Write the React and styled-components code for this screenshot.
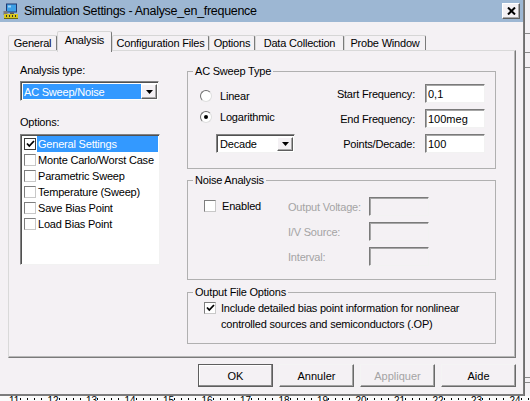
import React from 'react';
import styled, { createGlobalStyle, css } from 'styled-components';

const FONT = `"Liberation Sans", Arial, sans-serif`;
const BG = '#f4f1f4';
const DIS = '#a4a4a4';

const Global = createGlobalStyle`
  html, body { margin: 0; padding: 0; background: ${BG}; }
  body { font-family: ${FONT}; font-size: 11px; letter-spacing: -0.2px; color: #000; }
  * { box-sizing: border-box; }
`;

const Screen = styled.div`
  width: 530px;
  height: 401px;
  overflow: hidden;
  display: grid;
  grid-template-columns: 524px 6px;
  grid-template-rows: 396px 5px;
  background: ${BG};
`;

const Dialog = styled.div`
  display: flex;
  flex-direction: column;
  background: ${BG};
  border-right: 1px solid #7c7c7c;
  border-bottom: 2px solid #7c7c7c;
`;

const TitleBar = styled.div`
  height: 22px;
  flex: none;
  display: flex;
  align-items: center;
  padding: 0 3px 0 3px;
  background: #9db7d3;
`;

const TitleText = styled.span`
  flex: 1;
  margin-left: 5px;
  font-size: 12.5px;
  letter-spacing: -0.3px;
  line-height: 22px;
  white-space: nowrap;
`;

const CloseBtn = styled.div`
  width: 18px;
  height: 16px;
  display: flex;
  align-items: center;
  justify-content: center;
  background: ${BG};
  border: 1px solid;
  border-color: #ffffff #5e5e5e #5e5e5e #ffffff;
  box-shadow: inset -1px -1px 0 #a8a8a8;
`;

const TabStrip = styled.div`
  display: flex;
  align-items: flex-end;
  height: 19px;
  margin: 9px 0 0 8px;
  position: relative;
  z-index: 1;
`;

const Tab = styled.div`
  width: ${p => p.$w}px;
  height: ${p => (p.$active ? 21 : 15)}px;
  margin-bottom: ${p => (p.$active ? -2 : 0)}px;
  padding-bottom: ${p => (p.$active ? 4 : 0)}px;
  background: ${BG};
  border: 1px solid;
  border-bottom: none;
  border-color: #d6d6d6 #7a7a7a transparent #d6d6d6;
  border-radius: 2px 2px 0 0;
  display: flex;
  align-items: center;
  justify-content: center;
  line-height: 13px;
  white-space: nowrap;
`;

const Panel = styled.div`
  height: 308px;
  margin: 0 7px 0 8px;
  border: 1px solid;
  border-color: #d9d9d9 #7a7a7a #7a7a7a #d9d9d9;
  box-shadow: inset -1px -1px 0 #b8b8b8;
  display: flex;
  align-items: flex-start;
  padding: 12px 0 0 11px;
`;

const LeftCol = styled.div`
  width: 140px;
  display: flex;
  flex-direction: column;
`;

const FieldLabel = styled.div`
  height: 15px;
  line-height: 15px;
  margin-top: ${p => p.$mt || 0}px;
  white-space: nowrap;
`;

const Combo = styled.div`
  width: ${p => p.$w}px;
  height: ${p => p.$h}px;
  margin-top: ${p => p.$mt || 0}px;
  margin-left: ${p => p.$ml || 0}px;
  display: flex;
  align-items: stretch;
  background: #fff;
  border: 1px solid;
  border-color: #828282 #f2f2f2 #f2f2f2 #828282;
  box-shadow: inset 1px 1px 0 #505050;
  padding: 2px 1px 1px 2px;
`;

const ComboValue = styled.div`
  flex: 1;
  padding-left: 1px;
  display: flex;
  align-items: center;
  background: ${p => (p.$sel ? '#3399ff' : 'transparent')};
  color: ${p => (p.$sel ? '#fff' : '#000')};
  white-space: nowrap;
  overflow: hidden;
`;

const ComboArrow = styled.div`
  width: 16px;
  flex: none;
  display: flex;
  align-items: center;
  justify-content: center;
  background: ${BG};
  border: 1px solid;
  border-color: #ffffff #5e5e5e #5e5e5e #ffffff;
  box-shadow: inset -1px -1px 0 #a8a8a8;
`;

const ListBox = styled.div`
  height: 131px;
  margin-top: 4px;
  background: #fff;
  border: 1px solid;
  border-color: #828282 #f2f2f2 #f2f2f2 #828282;
  box-shadow: inset 1px 1px 0 #505050;
  padding: 1px 1px 0 2px;
  display: flex;
  flex-direction: column;
`;

const ListItem = styled.div`
  height: 16px;
  display: flex;
  align-items: center;
  padding-left: 1px;
`;

const ItemText = styled.div`
  flex: 1;
  height: 16px;
  margin-left: 1px;
  padding-left: 1px;
  line-height: 16px;
  white-space: nowrap;
  background: ${p => (p.$sel ? '#3399ff' : 'transparent')};
  color: ${p => (p.$sel ? '#fff' : '#000')};
`;

const Box = styled.div`
  width: 12px;
  height: 12px;
  flex: none;
  margin-top: ${p => p.$mt || 0}px;
  background: #fff;
  border: 1px solid;
  border-color: ${p => (p.$dark ? '#3c3c3c' : '#7e7e7e #c8c8c8 #c8c8c8 #7e7e7e')};
  display: flex;
  align-items: center;
  justify-content: center;
`;

const RightCol = styled.div`
  width: 309px;
  margin-left: 27px;
  margin-top: 8px;
  display: flex;
  flex-direction: column;
`;

const Group = styled.div`
  position: relative;
  height: ${p => p.$h}px;
  margin-top: ${p => p.$mt || 0}px;
  border: 1px solid #b0b0b0;
  display: flex;
  align-items: flex-start;
`;

const Caption = styled.span`
  position: absolute;
  top: -9px;
  left: 5px;
  padding: 0 2px;
  line-height: 16px;
  background: ${BG};
  white-space: nowrap;
`;

const RadioCol = styled.div`
  flex: 1;
  display: flex;
  flex-direction: column;
  padding: 16px 0 0 12px;
`;

const OptionRow = styled.div`
  height: 16px;
  display: flex;
  align-items: center;
  gap: ${p => p.$gap || 8}px;
  margin-top: ${p => p.$mt || 0}px;
  white-space: nowrap;
`;

const Radio = styled.div`
  width: 12px;
  height: 12px;
  border-radius: 50%;
  background: #fff;
  border: 1px solid;
  border-color: #6e6e6e #dedede #dedede #6e6e6e;
  display: flex;
  align-items: center;
  justify-content: center;
  &::after {
    content: '';
    display: ${p => (p.$on ? 'block' : 'none')};
    width: 4px;
    height: 4px;
    border-radius: 50%;
    background: #000;
  }
`;

const FieldGrid = styled.div`
  display: grid;
  grid-template-columns: ${p => p.$cols};
  grid-auto-rows: 19px;
  column-gap: ${p => p.$cgap || 0}px;
  row-gap: 6px;
  align-items: center;
  padding: ${p => p.$pad};
`;

const GridLabel = styled.div`
  justify-self: ${p => (p.$right ? 'end' : 'start')};
  color: ${p => (p.$disabled ? DIS : '#000')};
  white-space: nowrap;
`;

const TextBox = styled.input`
  width: 60px;
  height: 19px;
  margin: 0;
  padding: 0 0 0 2px;
  font: inherit;
  font-size: 11px;
  color: #000;
  background: ${p => (p.disabled ? BG : '#fff')};
  border: 1px solid;
  border-color: #7a7a7a #f2f2f2 #f2f2f2 #7a7a7a;
  box-shadow: inset 1px 1px 0 #a6a6a6;
  outline: none;
`;

const NoiseLeft = styled.div`
  width: 100px;
  padding: 1px 0 0 16px;
`;

const OutputRow = styled.div`
  display: flex;
  align-items: flex-start;
  padding: 7px 0 0 16px;
`;

const OutputText = styled.div`
  margin-left: 5px;
  line-height: 16px;
  white-space: nowrap;
`;

const ButtonRow = styled.div`
  display: flex;
  justify-content: flex-end;
  gap: 6px;
  margin-top: 6px;
  padding-right: 7px;
`;

const Btn = styled.button`
  width: 75px;
  height: 23px;
  padding: 0;
  font: inherit;
  font-size: 11px;
  background: ${BG};
  color: ${p => (p.disabled ? DIS : '#000')};
  border: 1px solid;
  border-color: #f4f4f4 #6a6a6a #6a6a6a #f4f4f4;
  box-shadow: inset -1px -1px 0 #a4a4a4;
  ${p =>
    p.$default &&
    css`
      border-color: #5e5e5e;
      box-shadow: inset -1px -1px 0 #8c8c8c, inset 1px 1px 0 #ffffff;
    `}
`;

const SideStrip = styled.div`
  border-left: 1px solid #6e6e6e;
  background:
    linear-gradient(#8a8a8a, #8a8a8a) 0 33px / 100% 1px no-repeat,
    linear-gradient(#8a8a8a, #8a8a8a) 0 52px / 100% 1px no-repeat,
    linear-gradient(#8a8a8a, #8a8a8a) 0 67px / 100% 1px no-repeat,
    linear-gradient(#8a8a8a, #8a8a8a) 0 377px / 100% 1px no-repeat,
    linear-gradient(#8a8a8a, #8a8a8a) 0 382px / 100% 1px no-repeat,
    ${BG};
`;

const Ruler = styled.div`
  grid-column: 1 / 3;
  height: 5px;
  overflow: hidden;
  background: #fbfbfb;
  display: flex;
  padding-left: 3px;
  font-size: 10px;
  letter-spacing: 0;
  line-height: 10px;
`;

const RulerCell = styled.div`
  width: ${p => p.$w}px;
  flex: none;
  display: flex;
  align-items: flex-start;
`;

const RulerNum = styled.span`
  width: 11px;
`;

const Tick = styled.span`
  width: 1px;
  height: 2px;
  margin-top: 2px;
  margin-right: ${p => p.$mr}px;
  background: #000;
`;

const Check = () => (
  <svg width="9" height="8" viewBox="0 0 9 8">
    <path d="M1 3.5 L3.3 6 L8 1" fill="none" stroke="#000" strokeWidth="1.8" />
  </svg>
);

const DownArrow = () => (
  <svg width="7" height="4" viewBox="0 0 7 4">
    <polygon points="0,0 7,0 3.5,4" fill="#000" />
  </svg>
);

const AppIcon = () => (
  <svg width="16" height="17" viewBox="0 0 16 17">
    <rect x="3" y="0.5" width="11" height="9" fill="#203a72" />
    <rect x="4" y="1.5" width="9" height="7" fill="#3da0e6" />
    <rect x="5" y="2.5" width="3" height="2" fill="#9fd4f7" />
    <rect x="7" y="9.5" width="4" height="1.5" fill="#555" />
    <rect x="0.5" y="8" width="4" height="4" fill="#7a7a7a" />
    <rect x="1" y="11" width="14" height="4" fill="#d8c81c" />
    <rect x="1" y="15" width="14" height="1" fill="#6b6a10" />
    <rect x="3" y="12" width="1" height="2" fill="#333" />
    <rect x="6" y="12" width="1" height="2" fill="#333" />
    <rect x="9" y="12" width="1" height="2" fill="#333" />
    <rect x="12" y="12" width="1" height="2" fill="#333" />
  </svg>
);

const CloseGlyph = () => (
  <svg width="9" height="8" viewBox="0 0 9 8">
    <path d="M1 0.5 L8 7.5 M8 0.5 L1 7.5" stroke="#000" strokeWidth="2" />
  </svg>
);

const tabs = [
  { label: 'General', w: 49 },
  { label: 'Analysis', w: 55, active: true },
  { label: 'Configuration Files', w: 97 },
  { label: 'Options', w: 46 },
  { label: 'Data Collection', w: 89 },
  { label: 'Probe Window', w: 82 },
];

const listItems = [
  { label: 'General Settings', checked: true, sel: true },
  { label: 'Monte Carlo/Worst Case' },
  { label: 'Parametric Sweep' },
  { label: 'Temperature (Sweep)' },
  { label: 'Save Bias Point' },
  { label: 'Load Bias Point' },
];

const rulerNums = Array.from({ length: 14 }, (_, i) => 11 + i);

export default function App() {
  return (
    <>
      <Global />
      <Screen>
        <Dialog>
          <TitleBar>
            <AppIcon />
            <TitleText>Simulation Settings - Analyse_en_frequence</TitleText>
            <CloseBtn>
              <CloseGlyph />
            </CloseBtn>
          </TitleBar>

          <TabStrip>
            {tabs.map(t => (
              <Tab key={t.label} $w={t.w} $active={t.active}>
                {t.label}
              </Tab>
            ))}
          </TabStrip>

          <Panel>
            <LeftCol>
              <FieldLabel>Analysis type:</FieldLabel>
              <Combo $w={139} $h={20} $mt={3}>
                <ComboValue $sel>AC Sweep/Noise</ComboValue>
                <ComboArrow>
                  <DownArrow />
                </ComboArrow>
              </Combo>
              <FieldLabel $mt={14}>Options:</FieldLabel>
              <ListBox>
                {listItems.map(it => (
                  <ListItem key={it.label}>
                    <Box $dark={it.checked}>{it.checked && <Check />}</Box>
                    <ItemText $sel={it.sel}>{it.label}</ItemText>
                  </ListItem>
                ))}
              </ListBox>
            </LeftCol>

            <RightCol>
              <Group $h={98}>
                <Caption>AC Sweep Type</Caption>
                <RadioCol>
                  <OptionRow>
                    <Radio />
                    Linear
                  </OptionRow>
                  <OptionRow $mt={5}>
                    <Radio $on />
                    Logarithmic
                  </OptionRow>
                  <Combo $w={79} $h={19} $mt={9} $ml={16}>
                    <ComboValue>Decade</ComboValue>
                    <ComboArrow>
                      <DownArrow />
                    </ComboArrow>
                  </Combo>
                </RadioCol>
                <FieldGrid $cols="auto 60px" $cgap={10} $pad="12px 10px 0 0">
                  <GridLabel $right>Start Frequency:</GridLabel>
                  <TextBox readOnly value="0,1" />
                  <GridLabel $right>End Frequency:</GridLabel>
                  <TextBox readOnly value="100meg" />
                  <GridLabel $right>Points/Decade:</GridLabel>
                  <TextBox readOnly value="100" />
                </FieldGrid>
              </Group>

              <Group $h={100} $mt={11}>
                <Caption>Noise Analysis</Caption>
                <NoiseLeft>
                  <OptionRow $gap={6} $mt={16}>
                    <Box />
                    Enabled
                  </OptionRow>
                </NoiseLeft>
                <FieldGrid $cols="81px 60px" $pad="16px 0 0 0">
                  <GridLabel $disabled>Output Voltage:</GridLabel>
                  <TextBox disabled value="" readOnly />
                  <GridLabel $disabled>I/V Source:</GridLabel>
                  <TextBox disabled value="" readOnly />
                  <GridLabel $disabled>Interval:</GridLabel>
                  <TextBox disabled value="" readOnly />
                </FieldGrid>
              </Group>

              <Group $h={52} $mt={12}>
                <Caption>Output File Options</Caption>
                <OutputRow>
                  <Box $mt={2}>
                    <Check />
                  </Box>
                  <OutputText>
                    Include detailed bias point information for nonlinear
                    <br />
                    controlled sources and semiconductors (.OP)
                  </OutputText>
                </OutputRow>
              </Group>
            </RightCol>
          </Panel>

          <ButtonRow>
            <Btn $default>OK</Btn>
            <Btn>Annuler</Btn>
            <Btn disabled>Appliquer</Btn>
            <Btn>Aide</Btn>
          </ButtonRow>
        </Dialog>
        <SideStrip />
        <Ruler>
          <Tick $mr={6} />
          {rulerNums.map(n => (
            <RulerCell key={n} $w={38.5}>
              <RulerNum>{n}</RulerNum>
              <Tick $mr={6} />
              <Tick $mr={6} />
              <Tick $mr={6} />
              <Tick $mr={0} />
            </RulerCell>
          ))}
        </Ruler>
      </Screen>
    </>
  );
}
